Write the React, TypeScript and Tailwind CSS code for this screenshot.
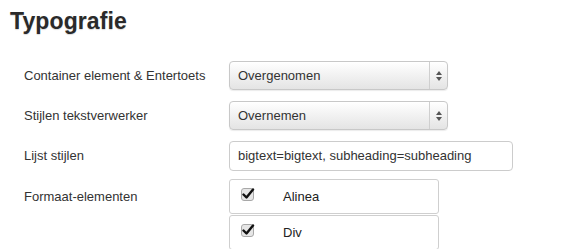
import React from 'react';

const font = { fontFamily: '"Liberation Sans", Arial, sans-serif' };

function SelectBox({ value }: { value: string }) {
  return (
    <div className="flex h-[29px] w-[219px] items-stretch rounded-[4px] border border-[#c8c8c8] bg-gradient-to-b from-[#ffffff] to-[#e4e4e4] shadow-[inset_0_1px_0_#fff,0_1px_1px_rgba(0,0,0,0.08)]">
      <div className="flex flex-1 items-center pl-[8px] text-[13px] text-[#333]">{value}</div>
      <div className="flex w-[18px] items-center justify-center border-l border-[#cfcfcf]">
        <svg width="6" height="10" viewBox="0 0 6 10">
          <path d="M3 0 L6 4 L0 4 Z" fill="#555" />
          <path d="M0 6 L6 6 L3 10 Z" fill="#555" />
        </svg>
      </div>
    </div>
  );
}

function CheckRow({ label }: { label: string }) {
  return (
    <div className="flex h-[35px] w-[210px] items-center rounded-[3px] border border-[#cfcfcf] bg-white">
      <div className="ml-[11px] mt-[-3px]">
        <svg width="14" height="14" viewBox="0 0 14 14">
          <rect x="0.5" y="0.5" width="12" height="12" rx="2.5" fill="#e6e6e6" stroke="#a8a8a8" />
          <path d="M2.5 6.5 L5.5 9.5 L12 1.5" fill="none" stroke="#111" strokeWidth="2.4" strokeLinecap="round" strokeLinejoin="round" />
        </svg>
      </div>
      <span className="ml-[28px] text-[13px] text-[#222]">{label}</span>
    </div>
  );
}

export default function App() {
  return (
    <div className="h-[249px] w-[576px] overflow-hidden bg-white" style={font}>
      <h1 className="pl-[10px] pt-[6px] text-[23px] font-bold leading-[30px] tracking-[0.1px] text-[#2a2a2a] [text-shadow:0_1px_1px_rgba(0,0,0,0.15)]">
        Typografie
      </h1>
      <div className="mt-[25px] flex flex-col pl-[24px] text-[13px] text-[#333]">
        <div className="flex items-center">
          <label className="w-[205px]">Container element &amp; Entertoets</label>
          <SelectBox value="Overgenomen" />
        </div>
        <div className="mt-[11px] flex items-center">
          <label className="w-[205px]">Stijlen tekstverwerker</label>
          <SelectBox value="Overnemen" />
        </div>
        <div className="mt-[11px] flex items-center">
          <label className="w-[205px]">Lijst stijlen</label>
          <div className="flex h-[30px] w-[284px] items-center rounded-[4px] border border-[#cccccc] bg-white pl-[8px] text-[13px] text-[#333]">
            bigtext=bigtext, subheading=subheading
          </div>
        </div>
        <div className="mt-[8px] flex">
          <label className="w-[205px] pt-[8px]">Formaat-elementen</label>
          <div className="flex flex-col gap-[1px]">
            <CheckRow label="Alinea" />
            <CheckRow label="Div" />
          </div>
        </div>
      </div>
    </div>
  );
}
